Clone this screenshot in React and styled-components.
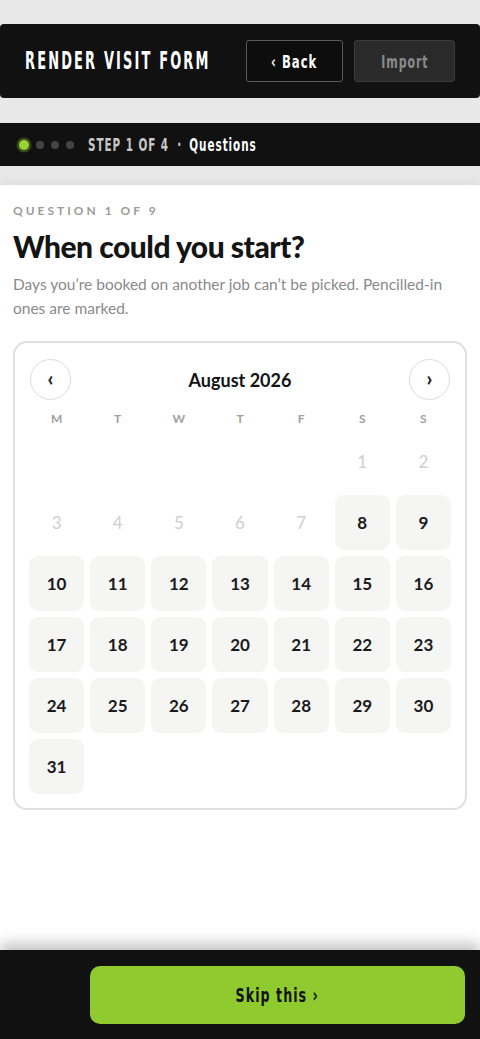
import React from "react";
import styled, { createGlobalStyle } from "styled-components";

const GlobalStyle = createGlobalStyle`
  html, body {
    margin: 0;
    padding: 0;
    background: #e8e8e8;
  }
  * {
    box-sizing: border-box;
  }
`;

const condensed = `"DejaVu Sans Condensed", "Liberation Sans", sans-serif`;
const body = `Lato, "Noto Sans", sans-serif`;

// No narrow display face is installed, so the condensed labels are squeezed
const Squeeze = styled.span`
  display: inline-block;
  white-space: nowrap;
  transform: scaleX(${({ $x }) => $x});
  transform-origin: ${({ $origin }) => $origin || "center"};
`;

const Page = styled.div`
  min-height: 100vh;
  display: flex;
  flex-direction: column;
  padding-top: 24px;
`;

const TopBar = styled.header`
  height: 74px;
  background: #111;
  border-radius: 4px;
  display: flex;
  align-items: center;
  padding: 0 25px;
  gap: 11px;
`;

const Title = styled.h1`
  margin: 0;
  flex: 1;
  min-width: 0;
  font-family: ${condensed};
  font-weight: 700;
  font-size: 24px;
  letter-spacing: 3.6px;
  color: #fff;
`;

const HeaderButton = styled.button`
  height: 42px;
  width: ${({ $w }) => $w}px;
  border-radius: 3px;
  border: 1px solid ${({ $muted }) => ($muted ? "#3a3a3a" : "#5a5a5a")};
  background: ${({ $muted }) => ($muted ? "#2a2a2a" : "#0d0d0d")};
  color: ${({ $muted }) => ($muted ? "#8a8a8a" : "#fff")};
  font-family: ${condensed};
  font-weight: 700;
  font-size: 18px;
  letter-spacing: 1.4px;
  padding: 0;
  display: grid;
  place-items: center;
  cursor: pointer;
`;

const StepBar = styled.div`
  margin-top: 25px;
  height: 43px;
  background: #111;
  display: flex;
  align-items: center;
  padding-left: 19px;
`;

const Dots = styled.div`
  display: flex;
  align-items: center;
  gap: 7px;
  margin-right: 14px;
`;

const Dot = styled.span`
  width: ${({ $on }) => ($on ? 10 : 8)}px;
  height: ${({ $on }) => ($on ? 10 : 8)}px;
  border-radius: 50%;
  background: ${({ $on }) => ($on ? "#9ad232" : "#444")};
  box-shadow: ${({ $on }) => ($on ? "0 0 0 2.5px rgba(154,210,50,0.3)" : "none")};
`;

const StepText = styled.span`
  font-family: ${condensed};
  font-weight: 700;
  font-size: 17px;
  letter-spacing: 1.4px;
  color: ${({ $bright }) => ($bright ? "#fff" : "#c8c8c8")};
`;

const Sep = styled.span`
  color: #c8c8c8;
  margin: 0 12px;
  font-family: ${condensed};
  font-weight: 700;
  font-size: 17px;
`;

const Main = styled.main`
  margin-top: 19px;
  flex: 1;
  background: #fff;
  box-shadow: 0 -2px 10px rgba(0, 0, 0, 0.06);
  padding: 18px 13px 0;
  font-family: ${body};
`;

const Eyebrow = styled.div`
  font-size: 12px;
  font-weight: 700;
  letter-spacing: 3px;
  color: #9b9b9b;
  line-height: 16px;
`;

const Heading = styled.h2`
  margin: 9px 0 0;
  font-size: 30px;
  line-height: 36px;
  font-weight: 900;
  color: #141414;
  letter-spacing: -0.5px;
`;

const Lede = styled.p`
  margin: 8px 0 0;
  font-size: 15.5px;
  line-height: 24px;
  color: #8a8a8a;
`;

const Calendar = styled.section`
  margin-top: 21px;
  border: 2px solid #e0e0e0;
  border-radius: 14px;
  padding: 16px 14px 14px;
`;

const CalHead = styled.div`
  display: flex;
  align-items: center;
  justify-content: space-between;
  padding: 0 1px;
`;

const NavButton = styled.button`
  width: 41px;
  height: 41px;
  border-radius: 50%;
  border: 1.5px solid #dcdcdc;
  background: #fff;
  color: #222;
  font-family: ${body};
  font-weight: 900;
  font-size: 20px;
  line-height: 1;
  display: grid;
  place-items: center;
  padding: 0 0 3px;
  cursor: pointer;
`;

const Month = styled.div`
  font-size: 18px;
  font-weight: 700;
  color: #141414;
`;

const Grid = styled.div`
  display: grid;
  grid-template-columns: repeat(7, 1fr);
  column-gap: 6px;
  row-gap: 6px;
`;

const Weekday = styled.div`
  text-align: center;
  font-size: 12px;
  font-weight: 700;
  color: #a0a0a0;
  margin: 11px 0 2px;
`;

const Day = styled.button`
  height: 55px;
  border: none;
  border-radius: 9px;
  background: ${({ $off }) => ($off ? "transparent" : "#f5f5f4")};
  color: ${({ $off }) => ($off ? "#cfcfcf" : "#1a1a1a")};
  font-family: ${body};
  font-size: 17px;
  font-weight: ${({ $off }) => ($off ? 400 : 700)};
  cursor: ${({ $off }) => ($off ? "default" : "pointer")};
`;

const Footer = styled.footer`
  height: 89px;
  background: #111;
  box-shadow: 0 -6px 14px rgba(0, 0, 0, 0.25);
  display: flex;
  justify-content: flex-end;
  padding: 16px 15px 0;
`;

const SkipButton = styled.button`
  width: 375px;
  height: 58px;
  border: none;
  border-radius: 10px;
  background: #8fca2f;
  color: #111;
  font-family: ${condensed};
  font-weight: 700;
  font-size: 19px;
  letter-spacing: 1.4px;
  display: grid;
  place-items: center;
  cursor: pointer;
`;

const weekdays = ["M", "T", "W", "T", "F", "S", "S"];
const days = Array.from({ length: 31 }, (_, i) => i + 1);

export default function App() {
  return (
    <Page>
      <GlobalStyle />
      <TopBar>
        <Title>
          <Squeeze $x={0.6} $origin="left">RENDER VISIT FORM</Squeeze>
        </Title>
        <HeaderButton $w={97}>
          <Squeeze $x={0.72}>‹ Back</Squeeze>
        </HeaderButton>
        <HeaderButton $w={101} $muted>
          <Squeeze $x={0.68}>Import</Squeeze>
        </HeaderButton>
      </TopBar>
      <StepBar>
        <Dots>
          <Dot $on />
          <Dot />
          <Dot />
          <Dot />
        </Dots>
        <Squeeze $x={0.68} $origin="left">
          <StepText>STEP 1 OF 4</StepText>
          <Sep>·</Sep>
          <StepText $bright>Questions</StepText>
        </Squeeze>
      </StepBar>
      <Main>
        <Eyebrow>QUESTION 1 OF 9</Eyebrow>
        <Heading>When could you start?</Heading>
        <Lede>
          Days you’re booked on another job can’t be picked. Pencilled-in
          ones are marked.
        </Lede>
        <Calendar>
          <CalHead>
            <NavButton aria-label="Previous month">‹</NavButton>
            <Month>August 2026</Month>
            <NavButton aria-label="Next month">›</NavButton>
          </CalHead>
          <Grid>
            {weekdays.map((w, i) => (
              <Weekday key={i}>{w}</Weekday>
            ))}
            {Array.from({ length: 5 }, (_, i) => (
              <span key={`b${i}`} />
            ))}
            {days.map((d) => (
              <Day key={d} $off={d < 8}>
                {d}
              </Day>
            ))}
          </Grid>
        </Calendar>
      </Main>
      <Footer>
        <SkipButton>
          <Squeeze $x={0.74}>Skip this ›</Squeeze>
        </SkipButton>
      </Footer>
    </Page>
  );
}
